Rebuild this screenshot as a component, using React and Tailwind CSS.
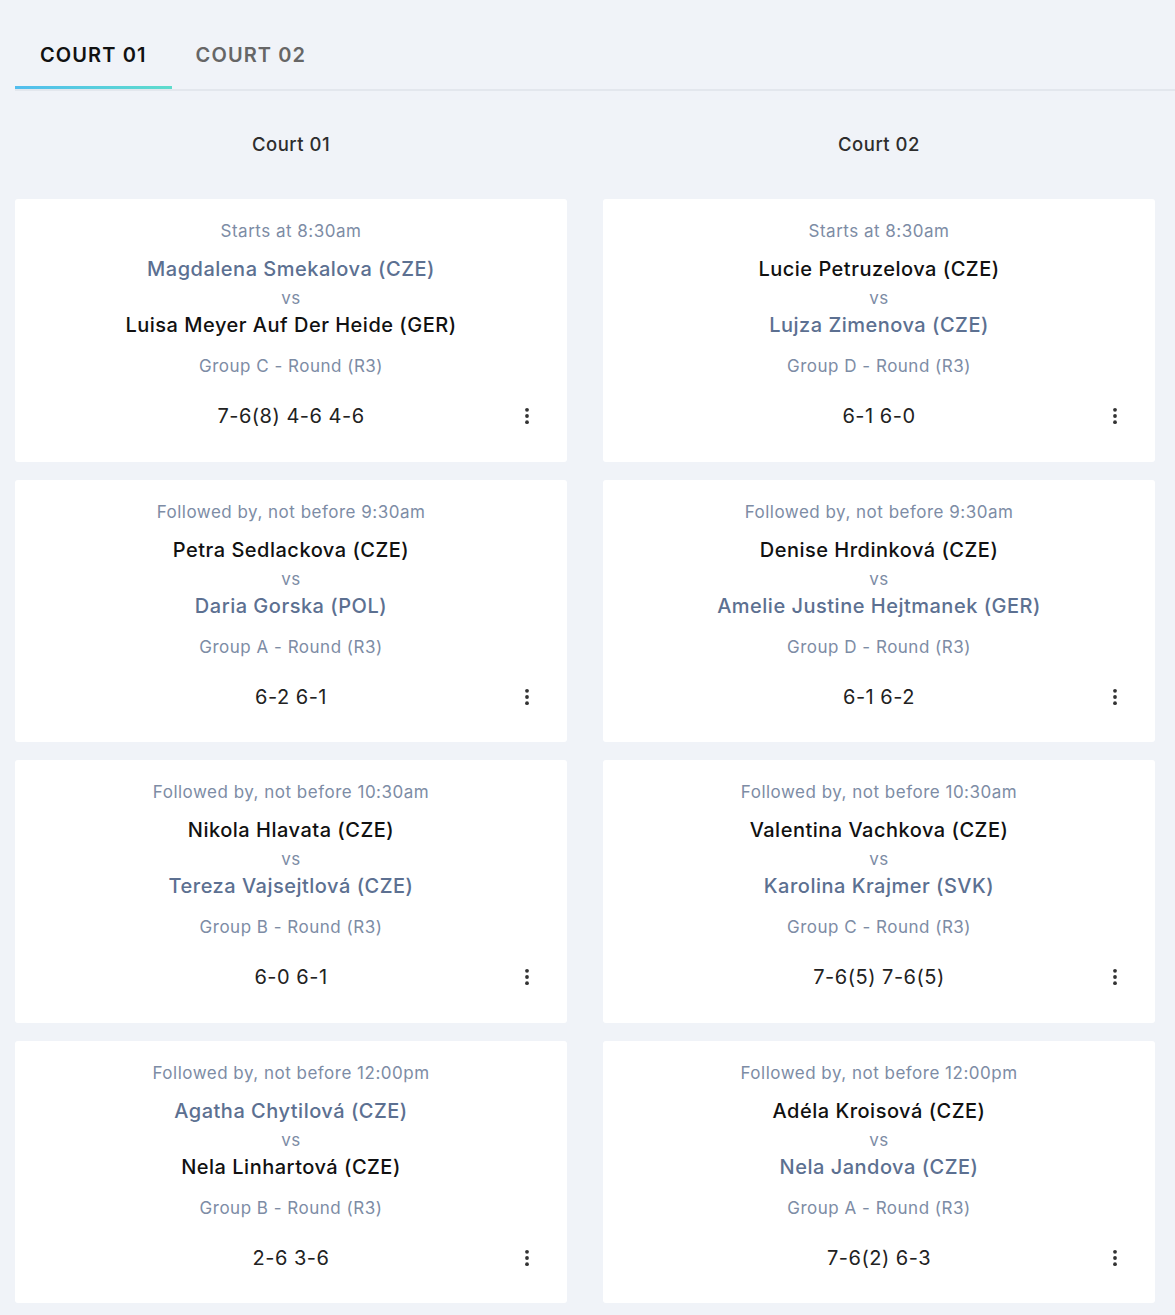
import React from "react";

const court1 = [
  { time: "Starts at 8:30am", p1: "Magdalena Smekalova (CZE)", p2: "Luisa Meyer Auf Der Heide (GER)", win: 1, group: "Group C - Round (R3)", score: "7-6(8) 4-6 4-6" },
  { time: "Followed by, not before 9:30am", p1: "Petra Sedlackova (CZE)", p2: "Daria Gorska (POL)", win: 2, group: "Group A - Round (R3)", score: "6-2 6-1" },
  { time: "Followed by, not before 10:30am", p1: "Nikola Hlavata (CZE)", p2: "Tereza Vajsejtlová (CZE)", win: 2, group: "Group B - Round (R3)", score: "6-0 6-1" },
  { time: "Followed by, not before 12:00pm", p1: "Agatha Chytilová (CZE)", p2: "Nela Linhartová (CZE)", win: 1, group: "Group B - Round (R3)", score: "2-6 3-6" },
];
const court2 = [
  { time: "Starts at 8:30am", p1: "Lucie Petruzelova (CZE)", p2: "Lujza Zimenova (CZE)", win: 2, group: "Group D - Round (R3)", score: "6-1 6-0" },
  { time: "Followed by, not before 9:30am", p1: "Denise Hrdinková (CZE)", p2: "Amelie Justine Hejtmanek (GER)", win: 2, group: "Group D - Round (R3)", score: "6-1 6-2" },
  { time: "Followed by, not before 10:30am", p1: "Valentina Vachkova (CZE)", p2: "Karolina Krajmer (SVK)", win: 2, group: "Group C - Round (R3)", score: "7-6(5) 7-6(5)" },
  { time: "Followed by, not before 12:00pm", p1: "Adéla Kroisová (CZE)", p2: "Nela Jandova (CZE)", win: 2, group: "Group A - Round (R3)", score: "7-6(2) 6-3" },
];

function Dots() {
  return (
    <svg width="6" height="18" viewBox="0 0 6 18" className="block">
      <circle cx="3" cy="2.8" r="1.9" fill="#333" />
      <circle cx="3" cy="9" r="1.9" fill="#333" />
      <circle cx="3" cy="15.2" r="1.9" fill="#333" />
    </svg>
  );
}

function Card({ m }) {
  const c1 = m.win === 1 ? "text-[#5c7091]" : "text-[#111]";
  const c2 = m.win === 2 ? "text-[#5c7091]" : "text-[#111]";
  return (
    <div className="bg-white rounded-[3px] h-[262.5px] pt-[20px] flex flex-col items-center text-center">
      <div className="text-[17px] leading-[24px] tracking-[0.5px] text-[#7d8ca5]">{m.time}</div>
      <div className={`mt-[12px] text-[20px] leading-[28px] tracking-[0.5px] font-medium ${c1}`}>{m.p1}</div>
      <div className="mt-[4px] text-[17px] leading-[22px] tracking-[0.5px] text-[#7d8ca5]">vs</div>
      <div className={`mt-[2px] text-[20px] leading-[28px] tracking-[0.5px] font-medium ${c2}`}>{m.p2}</div>
      <div className="mt-[15px] text-[17px] leading-[24px] tracking-[0.5px] text-[#7d8ca5]">{m.group}</div>
      <div className="mt-[24px] w-full grid grid-cols-[1fr_auto_1fr] items-center">
        <div />
        <div className="text-[20px] leading-[28px] tracking-[0.5px] text-[#222]">{m.score}</div>
        <div className="flex justify-end pr-[37px]">
          <Dots />
        </div>
      </div>
    </div>
  );
}

function Column({ title, matches }) {
  return (
    <div className="flex flex-col">
      <div className="text-center text-[18.5px] leading-[24px] tracking-[0.5px] font-medium text-[#2d2d2d]">{title}</div>
      <div className="mt-[43px] flex flex-col gap-[18px]">
        {matches.map((m, i) => (
          <Card key={i} m={m} />
        ))}
      </div>
    </div>
  );
}

export default function App() {
  return (
    <div className="min-h-[1315px] bg-[#f0f3f8] pl-[15px] pr-[20px] pt-[20px] pb-[12px]" style={{ fontFamily: "Inter, 'Noto Sans', sans-serif" }}>
      <div className="flex border-b-2 border-[#e3e7ed] -mr-[20px]">
        <div className="px-[25px] pt-[21px] pb-[17px] text-[20px] leading-[28px] font-semibold tracking-[1.1px] text-[#111] border-b-[3px] border-transparent relative">
          COURT 01
          <div className="absolute left-0 right-0 -bottom-[3px] h-[3px] bg-gradient-to-r from-[#52bdee] to-[#5edccc]" />
        </div>
        <div className="px-[24px] pt-[21px] pb-[17px] text-[20px] leading-[28px] font-semibold tracking-[1.1px] text-[#666] border-b-[3px] border-transparent">
          COURT 02
        </div>
      </div>
      <div className="mt-[41px] grid grid-cols-2 gap-x-[36px]">
        <Column title="Court 01" matches={court1} />
        <Column title="Court 02" matches={court2} />
      </div>
    </div>
  );
}
